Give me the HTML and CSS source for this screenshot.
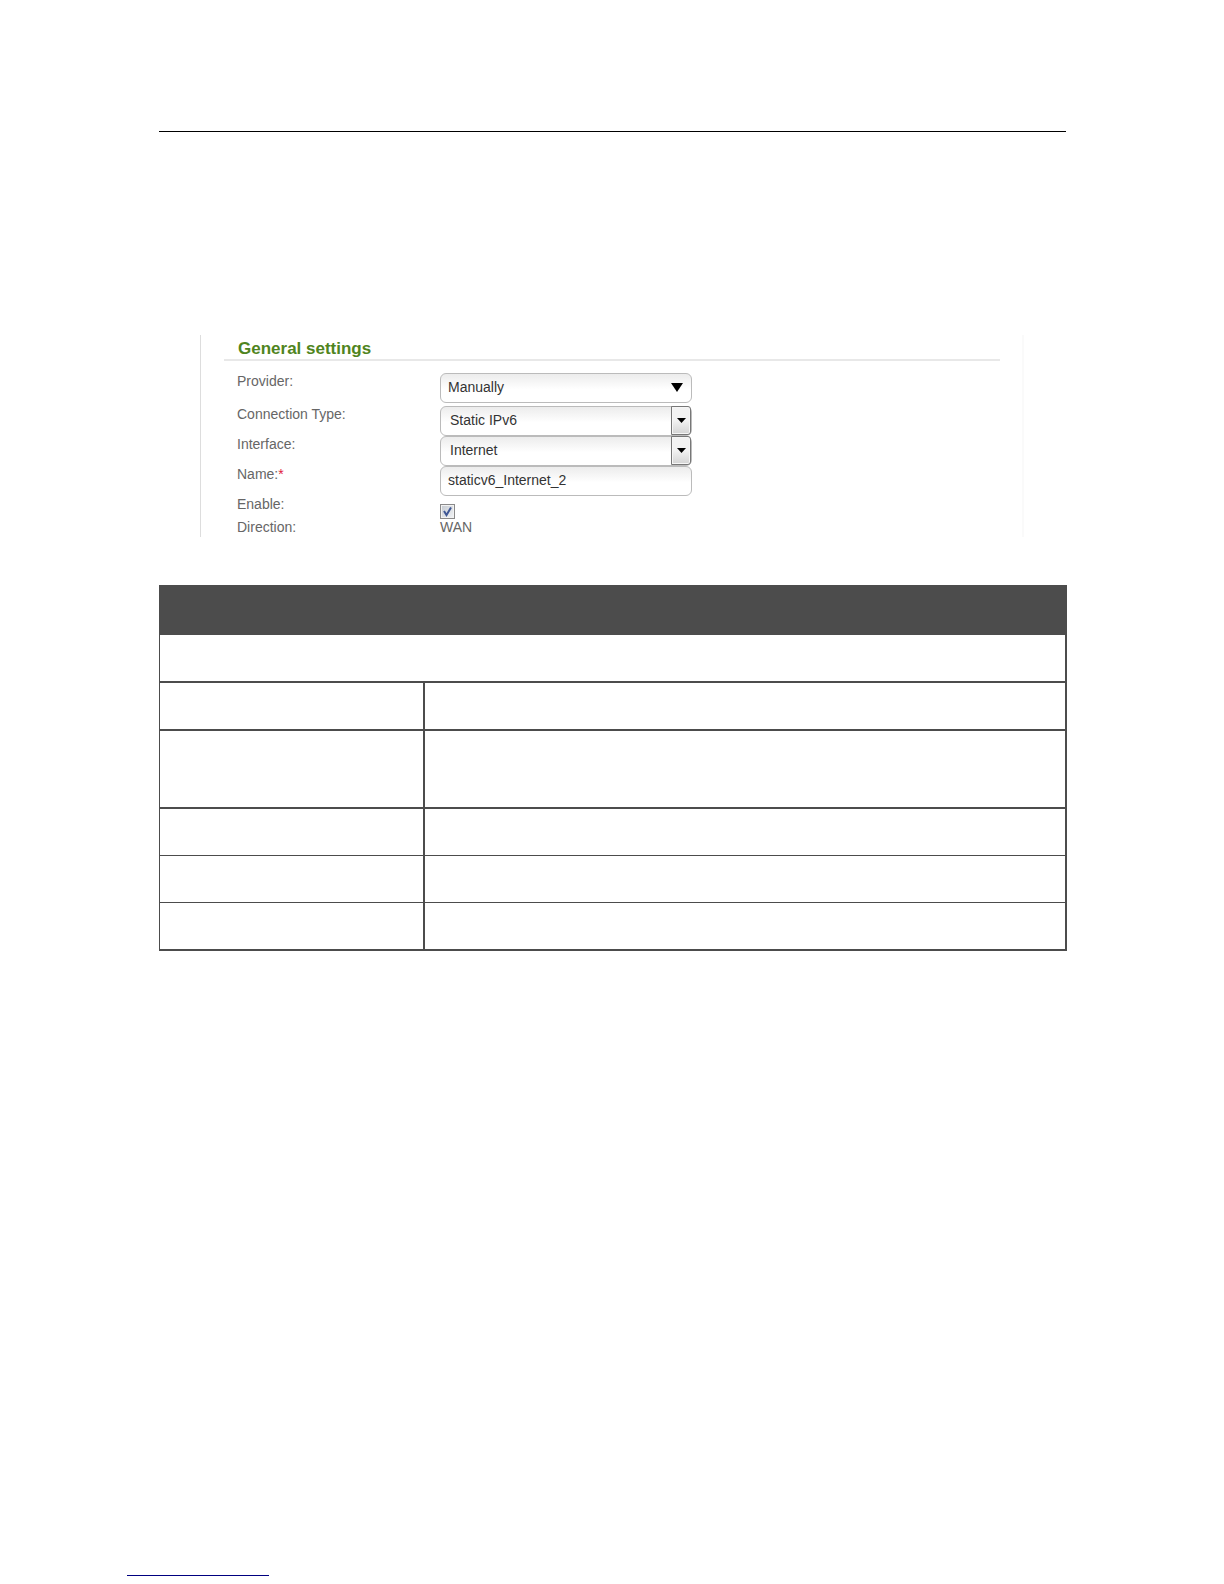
FILE: index.html
```
<!DOCTYPE html>
<html lang="en">
<head>
  <meta charset="UTF-8" />
  <meta name="viewport" content="width=device-width, initial-scale=1.0"/>
  <title>General settings</title>
  <link rel="stylesheet" href="styles.css">
</head>
<body>
  <header class="page-header"></header>

  <main>
    <form class="panel">
      <h2>General settings</h2>

      <div class="row row-provider">
        <label for="provider">Provider:</label>
        <div class="field">
          <select id="provider" class="control">
            <option>Manually</option>
          </select>
          <svg class="arrow" width="12" height="9" viewBox="0 0 12 9"><path d="M0 0h12L6 9z"/></svg>
        </div>
      </div>

      <div class="row">
        <label for="connection-type">Connection Type:</label>
        <div class="field">
          <select id="connection-type" class="control boxed">
            <option>Static IPv6</option>
          </select>
          <span class="drop"><svg width="9" height="5" viewBox="0 0 9 5"><path d="M0 0h9L4.5 5z"/></svg></span>
        </div>
      </div>

      <div class="row">
        <label for="interface">Interface:</label>
        <div class="field">
          <select id="interface" class="control boxed">
            <option>Internet</option>
          </select>
          <span class="drop"><svg width="9" height="5" viewBox="0 0 9 5"><path d="M0 0h9L4.5 5z"/></svg></span>
        </div>
      </div>

      <div class="row">
        <label for="name">Name:<span class="required">*</span></label>
        <div class="field">
          <input type="text" id="name" class="control" value="staticv6_Internet_2">
        </div>
      </div>

      <div class="row row-enable">
        <label for="enable">Enable:</label>
        <div class="check">
          <input type="checkbox" id="enable" checked>
          <svg class="tick" width="15" height="15" viewBox="0 0 15 15"><path d="M4 7l2.500 4L11 3.500"/></svg>
        </div>
      </div>

      <div class="row">
        <span class="caption">Direction:</span>
        <span>WAN</span>
      </div>
    </form>

    <table>
      <colgroup>
        <col class="col-name">
        <col>
      </colgroup>
      <thead>
        <tr><th colspan="2"></th></tr>
      </thead>
      <tbody>
        <tr class="thick"><td colspan="2"></td></tr>
        <tr class="thick"><td></td><td></td></tr>
        <tr class="thick tall"><td></td><td></td></tr>
        <tr><td></td><td></td></tr>
        <tr><td></td><td></td></tr>
        <tr class="thick"><td></td><td></td></tr>
      </tbody>
    </table>
  </main>

  <footer>
    <div class="footer-line"></div>
  </footer>
</body>
</html>
```
FILE: styles.css
```
* {
  box-sizing: border-box;
}

body {
  font-family: "Liberation Sans", Arial, sans-serif;
  font-size: 14px;
  line-height: 16px;
  color: #666;
  background-color: #fff;
  margin: 0;
  min-height: 100vh;
  display: flex;
  flex-direction: column;
}

.page-header {
  height: 132px;
  margin: 0 158px 0 159px;
  border-bottom: 1px solid #000;
}

main {
  padding: 203px 157px 0 159px;
}

/* settings form */
.panel {
  margin: 0 43px 48px 41px;
  padding: 0 22px 2px 23px;
  border-left: 1px solid #ddd;
  border-right: 2px solid #fafafa;
}

.panel h2 {
  margin: 0 0 12px;
  padding: 4px 14px 0;
  font-size: 17px;
  line-height: 20px;
  color: #4f8420;
  border-bottom: 2px solid #e8e8e8;
}

.row {
  display: flex;
  align-items: flex-start;
  padding-left: 13px;
}

.row label,
.caption {
  width: 203px;
}

.row-provider {
  padding-bottom: 3px;
}

.row-enable {
  height: 23px;
}

.required {
  color: #e0203c;
}

.field {
  position: relative;
  width: 252px;
}

.control {
  display: block;
  width: 100%;
  height: 30px;
  margin: 0;
  padding: 0 7px 2px;
  appearance: none;
  font: inherit;
  color: #333;
  border: 1px solid #bbb;
  border-radius: 6px;
  background: linear-gradient(#ececec, #fff 55%);
}

.control.boxed {
  padding-left: 9px;
}

.arrow {
  position: absolute;
  top: 10px;
  right: 9px;
  pointer-events: none;
}

.drop {
  position: absolute;
  top: 0;
  right: 1px;
  bottom: 1px;
  width: 20px;
  display: flex;
  align-items: center;
  justify-content: center;
  border: 1px solid #777;
  border-radius: 0 3px 3px 0;
  box-shadow: inset 0 0 0 1px #f6f6f6;
  background: linear-gradient(#f2f2f2 50%, #d4d4d4);
  pointer-events: none;
}

.check {
  position: relative;
  align-self: flex-end;
  height: 15px;
}

.check input {
  display: block;
  width: 15px;
  height: 15px;
  margin: 0;
  appearance: none;
  border: 1px solid #8a8a8a;
  box-shadow: inset 0 0 0 1px #f2f2f2;
  background: linear-gradient(135deg, #c4c9d0, #f2f4f6);
}

.tick {
  position: absolute;
  top: 0;
  left: 0;
  display: none;
  fill: none;
  stroke: #3f5795;
  stroke-width: 2;
  pointer-events: none;
}

.check input:checked + .tick {
  display: block;
}

/* parameter table */
table {
  width: 100%;
  table-layout: fixed;
  border-collapse: separate;
  border-spacing: 0;
  border-left: 1px solid #4c4c4c;
}

.col-name {
  width: 265px;
}

th {
  height: 50px;
  padding: 0;
  background-color: #4c4c4c;
}

td {
  height: 47px;
  padding: 0;
  border-right: 2px solid #4c4c4c;
  border-bottom: 1px solid #4c4c4c;
}

.thick td {
  height: 48px;
  border-bottom-width: 2px;
}

.tall td {
  height: 78px;
}

footer {
  margin-top: auto;
  padding: 0 127px 8px;
}

.footer-line {
  width: 142px;
  border-bottom: 1px solid #000080;
}
```
